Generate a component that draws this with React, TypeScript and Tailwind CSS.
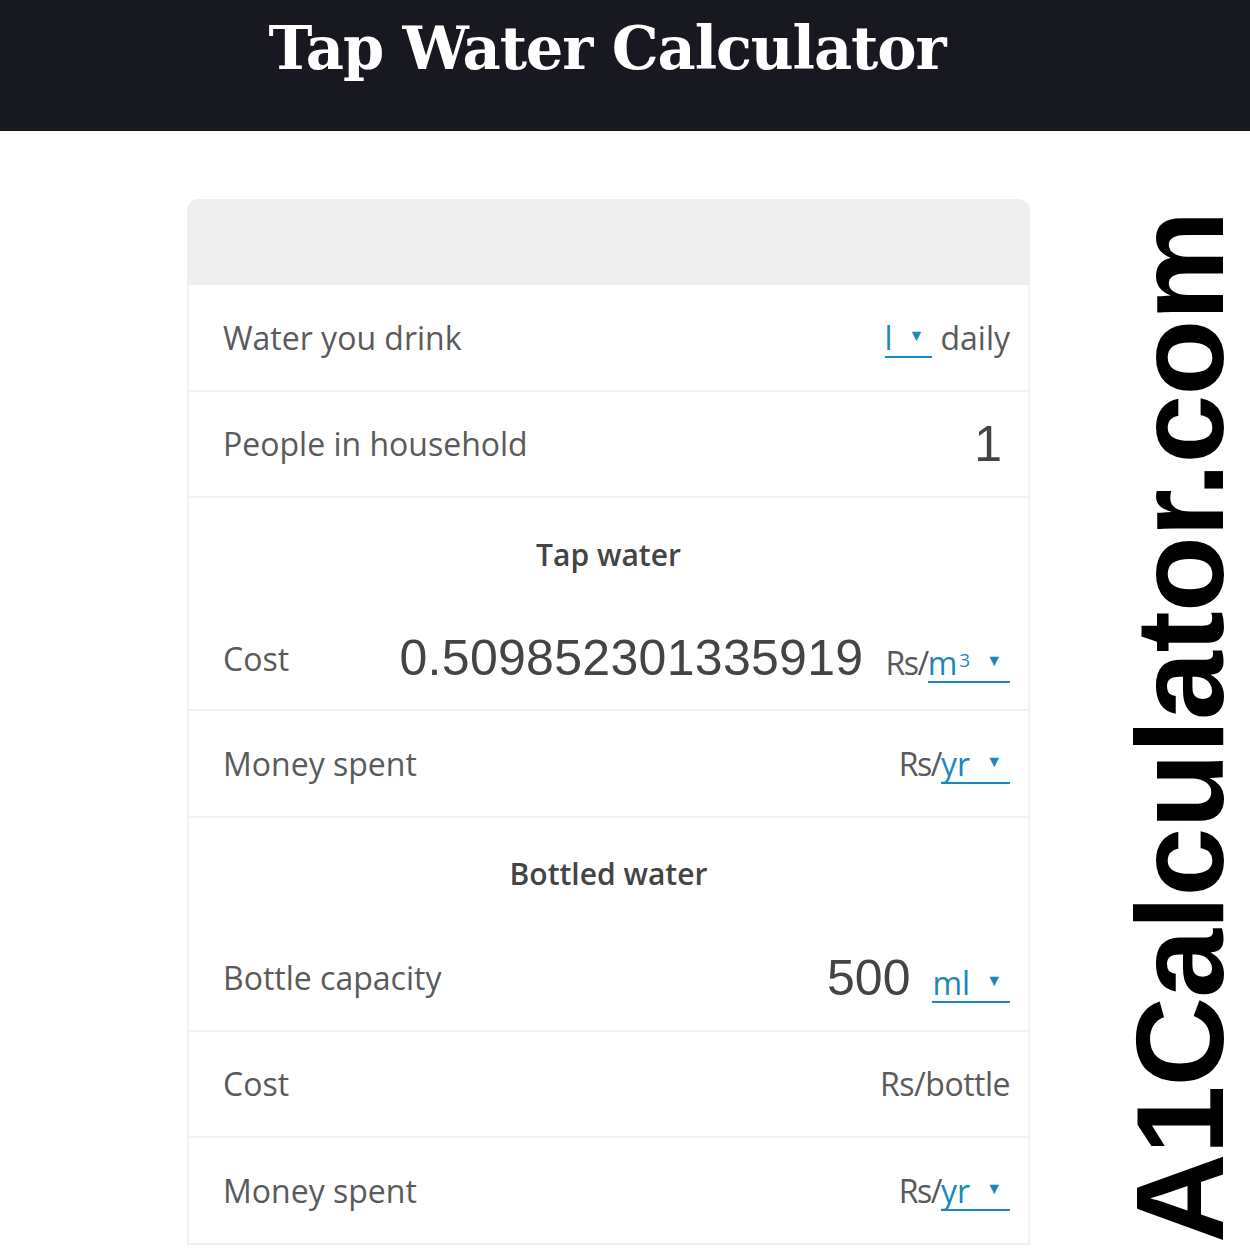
import React from "react";

const Unit = ({ text, sup }: { text: string; sup?: string }) => (
  <span className="inline-flex items-baseline border-b-2 border-[#1b87c0] text-[#1b87c0] leading-none pb-[2px]">
    <span>{text}</span>
    {sup ? <sup className="text-[19px] relative -top-[8px] ml-[2px]">{sup}</sup> : null}
    <span className="text-[16px] ml-[16px] mr-[8px] relative -top-[9px]">▼</span>
  </span>
);

const Row = ({ children, border = true, h = "h-[107px]" }: { children: React.ReactNode; border?: boolean; h?: string }) => (
  <div className={`flex items-center justify-between pl-[34px] pr-[18px] ${h} ${border ? "border-b-2 border-[#f2f2f2]" : ""}`}>
    {children}
  </div>
);

export default function App() {
  const sans = { fontFamily: '"Open Sans", "Noto Sans", sans-serif' };
  const num = { fontFamily: '"Liberation Sans", Arial, sans-serif' };
  return (
    <div className="relative w-[1250px] h-[1250px] overflow-hidden bg-white">
      <header className="h-[131px] bg-[#181820] flex justify-center">
        <h1
          className="text-white font-bold text-[59px] leading-none pt-[19px] pr-[36px] tracking-[-1.1px]"
          style={{ fontFamily: '"DejaVu Serif", serif' }}
        >
          Tap Water Calculator
        </h1>
      </header>

      <div className="pl-[187px] pt-[68px]">
        <div
          className="w-[843px] rounded-t-[12px] border-x-2 border-[#f2f2f2] text-[32px] text-[#5a5a5a]"
          style={sans}
        >
          <div className="h-[86px] bg-[#efefef] rounded-t-[12px] -mx-[2px]" />
          <Row>
            <span>Water you drink</span>
            <span className="flex items-baseline gap-[8px]">
              <Unit text="l" />
              <span>daily</span>
            </span>
          </Row>
          <Row h="h-[106px]">
            <span>People in household</span>
            <span className="text-[50px] text-[#444] mr-[8px]" style={num}>1</span>
          </Row>
          <div className="border-b-2 border-[#f2f2f2]">
            <div className="h-[110px] flex items-center justify-center pt-[2px] font-semibold text-[30px] text-[#444]">Tap water</div>
            <Row border={false} h="h-[101px]">
              <span>Cost</span>
              <span className="flex items-baseline gap-[22px]">
                <span className="text-[50px] text-[#444] tracking-[0.3px]" style={num}>
                  0.509852301335919
                </span>
                <span className="flex items-baseline">
                  <span className="tracking-[-1.5px]">Rs/</span>
                  <Unit text="m" sup="3" />
                </span>
              </span>
            </Row>
          </div>
          <Row>
            <span>Money spent</span>
            <span className="flex items-baseline">
              <span className="tracking-[-1.5px]">Rs/</span>
              <Unit text="yr" />
            </span>
          </Row>
          <div className="border-b-2 border-[#f2f2f2]">
            <div className="h-[108px] flex items-center justify-center pt-[2px] font-semibold text-[30px] text-[#444]">Bottled water</div>
            <Row border={false} h="h-[104px]">
              <span>Bottle capacity</span>
              <span className="flex items-baseline gap-[22px]">
                <span className="text-[50px] text-[#444]" style={num}>
                  500
                </span>
                <Unit text="ml" />
              </span>
            </Row>
          </div>
          <Row h="h-[106px]">
            <span>Cost</span>
            <span className="tracking-[-0.5px]">Rs/bottle</span>
          </Row>
          <Row>
            <span>Money spent</span>
            <span className="flex items-baseline">
              <span className="tracking-[-1.5px]">Rs/</span>
              <Unit text="yr" />
            </span>
          </Row>
        </div>
      </div>

      <div
        className="absolute left-[1118px] top-[205px] h-[1045px] flex items-center justify-center text-black font-bold text-[124px] leading-none tracking-[-1px] [writing-mode:vertical-rl] rotate-180"
        style={num}
      >
        A1Calculator.com
      </div>
    </div>
  );
}
